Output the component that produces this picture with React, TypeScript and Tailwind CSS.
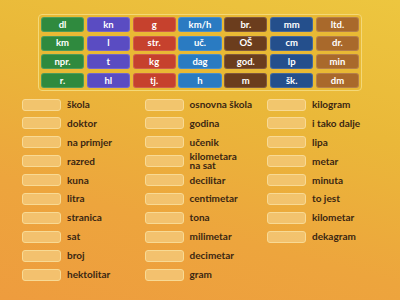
const tiles: [string, string][] = [
  ['dl', 'bg-[#2f8a3e]'], ['kn', 'bg-[#5a4cc2]'], ['g', 'bg-[#c6412d]'], ['km/h', 'bg-[#2a7bc2]'], ['br.', 'bg-[#6b3d1d]'], ['mm', 'bg-[#244f8c]'], ['ltd.', 'bg-[#a9692b]'],
  ['km', 'bg-[#2f8a3e]'], ['l', 'bg-[#5a4cc2]'], ['str.', 'bg-[#c6412d]'], ['uč.', 'bg-[#2a7bc2]'], ['OŠ', 'bg-[#6b3d1d]'], ['cm', 'bg-[#244f8c]'], ['dr.', 'bg-[#a9692b]'],
  ['npr.', 'bg-[#2f8a3e]'], ['t', 'bg-[#5a4cc2]'], ['kg', 'bg-[#c6412d]'], ['dag', 'bg-[#2a7bc2]'], ['god.', 'bg-[#6b3d1d]'], ['lp', 'bg-[#244f8c]'], ['min', 'bg-[#a9692b]'],
  ['r.', 'bg-[#2f8a3e]'], ['hl', 'bg-[#5a4cc2]'], ['tj.', 'bg-[#c6412d]'], ['h', 'bg-[#2a7bc2]'], ['m', 'bg-[#6b3d1d]'], ['šk.', 'bg-[#244f8c]'], ['dm', 'bg-[#a9692b]'],
];

const columns: string[][] = [
  ['škola', 'doktor', 'na primjer', 'razred', 'kuna', 'litra', 'stranica', 'sat', 'broj', 'hektolitar'],
  ['osnovna škola', 'godina', 'učenik', 'kilometara\nna sat', 'decilitar', 'centimetar', 'tona', 'milimetar', 'decimetar', 'gram'],
  ['kilogram', 'i tako dalje', 'lipa', 'metar', 'minuta', 'to jest', 'kilometar', 'dekagram'],
];

export default function App() {
  return (
    <div
      className="w-[400px] h-[300px] overflow-hidden bg-[linear-gradient(195deg,#edc63f_0%,#eab839_35%,#eda53d_70%,#ee9c3e_100%)] pt-[14px]"
      style={{ fontFamily: 'Lato, "Open Sans", sans-serif' }}
    >
      <div className="ml-[38px] w-[324px] rounded-[4px] border border-[#f4d877] bg-[#e9b934] p-[2px]">
        <div className="grid grid-cols-7 gap-x-[2.8px] gap-y-[3.7px]">
          {tiles.map(([t, c], i) => (
            <div
              key={i}
              className={`${c} h-[15px] rounded-[3px] border border-white/15 flex items-center justify-center text-white text-[9.5px] font-bold leading-none`}
            >
              {t}
            </div>
          ))}
        </div>
      </div>

      <div className="flex pl-[22px] pt-[4px]">
        {columns.map((col, ci) => (
          <div key={ci} className="w-[122.5px] flex flex-col">
            {col.map((w, i) => (
              <div key={i} className="h-[18.9px] flex items-center gap-[6px]">
                <div className="w-[39px] h-[12px] shrink-0 rounded-[3px] border border-[#f8da94] bg-[#f4c97a]/80" />
                <span className="text-[10px] font-bold text-[#3b2612] leading-[9px] whitespace-pre">{w}</span>
              </div>
            ))}
          </div>
        ))}
      </div>
    </div>
  );
}
